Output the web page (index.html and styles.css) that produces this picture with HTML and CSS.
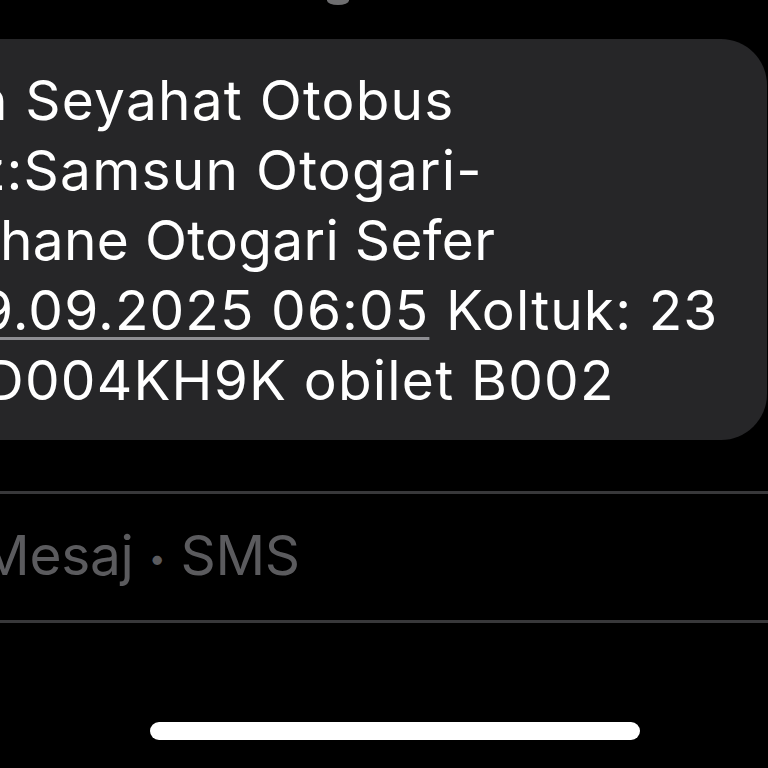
FILE: index.html
```html
<!DOCTYPE html>
<html lang="tr">
<head>
  <meta charset="UTF-8" />
  <meta name="viewport" content="width=device-width, initial-scale=1.0"/>
  <title>Mesajlar</title>
  <link rel="stylesheet" href="styles.css">
</head>
<body>

  <!-- ust kisim -->
  <div class="ust">
    <div class="ust-nokta"></div>
  </div>

  <!-- mesaj balonu -->
  <div class="balon">
    <div class="satir s1">n Seyahat Otobus</div>
    <div class="satir s2">z:Samsun Otogari-</div>
    <div class="satir s3">hane Otogari Sefer</div>
    <div class="satir s4"><span class="tarih">9.09.2025 06:05</span> Koltuk: 23</div>
    <div class="satir s5">D004KH9K obilet B002</div>
  </div>

  <!-- yazma alani -->
  <div class="yazma">
    <div class="cizgi"></div>
    <div class="yer-tutucu">Mesaj <span class="ayrac">•</span> SMS</div>
    <div class="cizgi"></div>
  </div>

  <div class="alt">
    <div class="ev-cubugu"></div>
  </div>

</body>
</html>
```

FILE: styles.css
```css
body {
  margin: 0;
  background: #000;
  font-family: Inter, "Noto Sans", sans-serif;
  color: white;
  width: 768px;
  height: 768px;
  overflow: hidden;
}

.ust {
  display: flow-root;
  height: 39px;
}

.ust-nokta {
  width: 22px;
  height: 9px;
  margin-top: -4px;
  margin-left: 327px;
  border-radius: 50%;
  background: #6e6e70;
}

.balon {
  margin-left: -60px;
  width: 827px;
  box-sizing: border-box;
  padding: 26px 0 25px 60px;
  background: #262628;
  border-radius: 46px;
}

.satir {
  font-size: 55px;
  line-height: 70px;
  white-space: nowrap;
  letter-spacing: 1.2px;
}

.s1 { text-indent: -25px; }
.s2 { text-indent: -25px; }
.s3 { text-indent: 0px; letter-spacing: 0.3px; }
.s4 { text-indent: -21px; letter-spacing: 1.1px; }
.s5 { text-indent: -16px; }

.tarih {
  text-decoration: underline;
  text-decoration-color: #8e8e93;
  text-decoration-thickness: 3px;
  text-underline-offset: 7px;
}

.yazma {
  margin-top: 51px;
}

.cizgi {
  height: 3px;
  background: #38383a;
}

.yer-tutucu {
  font-size: 55px;
  line-height: 70px;
  padding: 26px 0 27px 0;
  text-indent: -20px;
  letter-spacing: -0.3px;
  color: #5b5b5e;
  white-space: nowrap;
}

.ayrac {
  font-size: 30px;
  vertical-align: 6px;
}

.alt {
  padding-top: 99px;
}

.ev-cubugu {
  width: 490px;
  height: 18px;
  margin-left: 150px;
  border-radius: 9px;
  background: #fff;
}
```
